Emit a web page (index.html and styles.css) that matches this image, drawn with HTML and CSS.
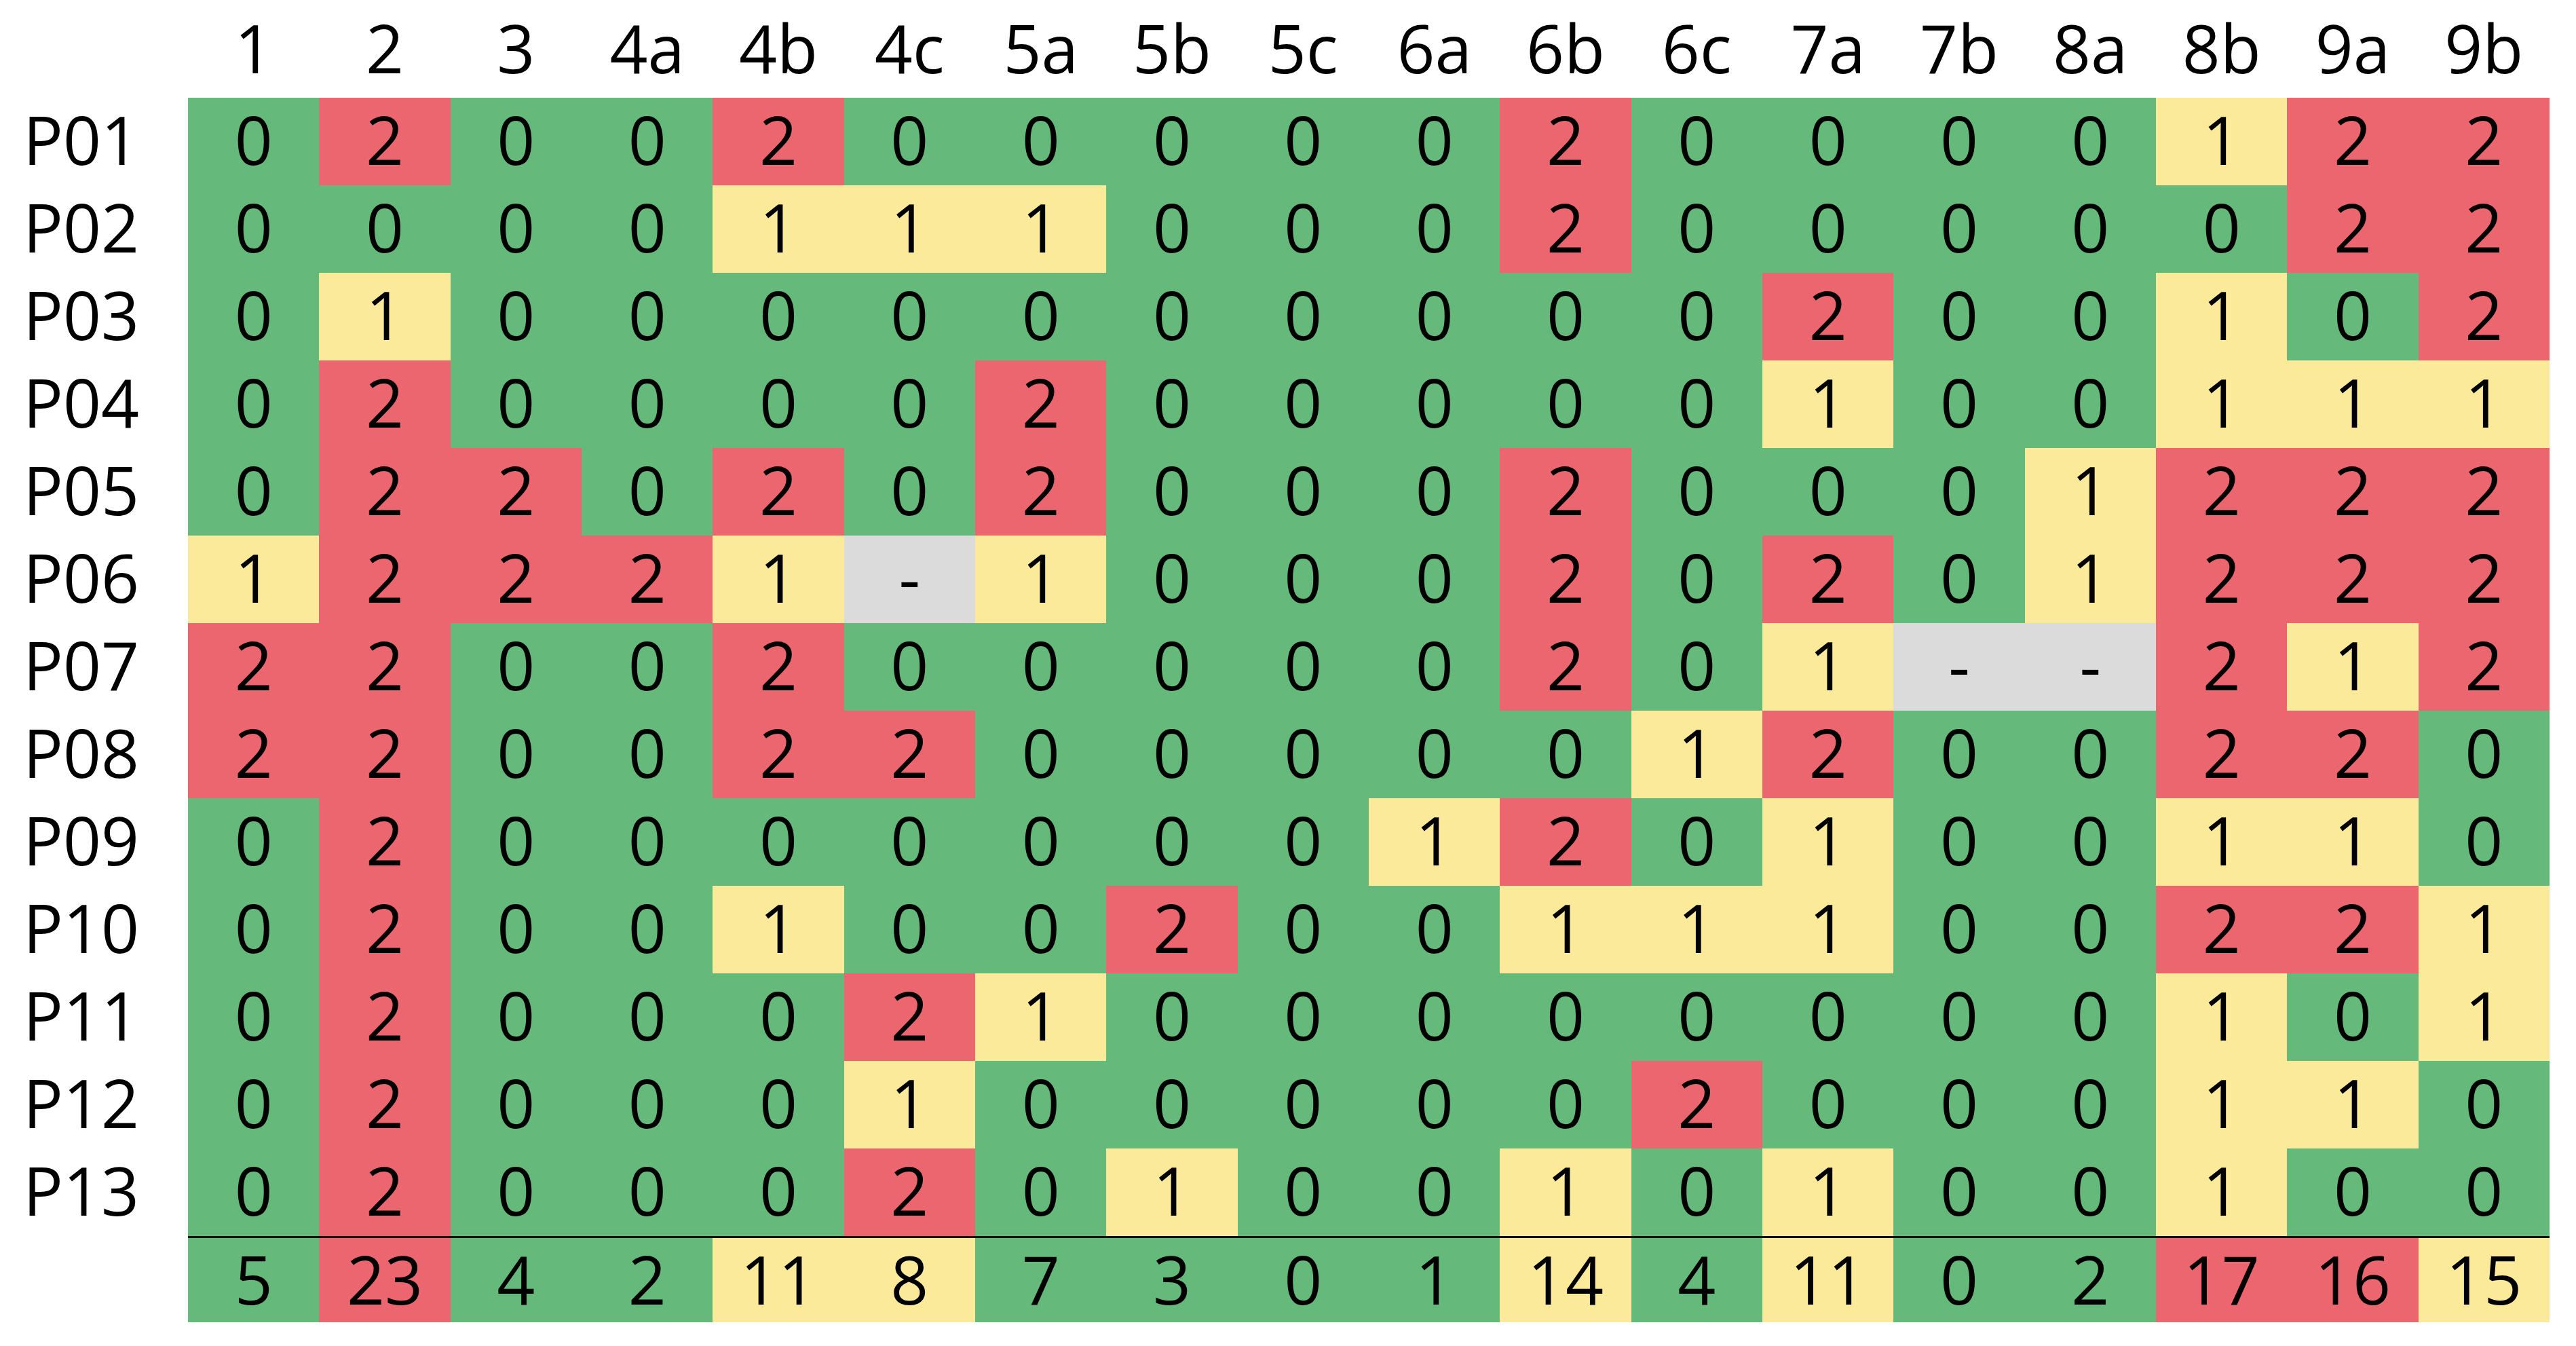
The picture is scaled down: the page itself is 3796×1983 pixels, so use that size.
FILE: index.html
```html
<!DOCTYPE html>
<html>
<head>
<meta charset="utf-8">
<title>Scores</title>
<link rel="stylesheet" href="styles.css">
</head>
<body>
<div class="table">
  <div class="hd"></div>
  <div class="hd">1</div><div class="hd">2</div><div class="hd">3</div><div class="hd">4a</div><div class="hd">4b</div><div class="hd">4c</div><div class="hd">5a</div><div class="hd">5b</div><div class="hd">5c</div><div class="hd">6a</div><div class="hd">6b</div><div class="hd">6c</div><div class="hd">7a</div><div class="hd">7b</div><div class="hd">8a</div><div class="hd">8b</div><div class="hd">9a</div><div class="hd">9b</div>

  <div class="lbl">P01</div>
  <div class="c g">0</div><div class="c r">2</div><div class="c g">0</div><div class="c g">0</div><div class="c r">2</div><div class="c g">0</div><div class="c g">0</div><div class="c g">0</div><div class="c g">0</div><div class="c g">0</div><div class="c r">2</div><div class="c g">0</div><div class="c g">0</div><div class="c g">0</div><div class="c g">0</div><div class="c y">1</div><div class="c r">2</div><div class="c r">2</div>

  <div class="lbl">P02</div>
  <div class="c g">0</div><div class="c g">0</div><div class="c g">0</div><div class="c g">0</div><div class="c y">1</div><div class="c y">1</div><div class="c y">1</div><div class="c g">0</div><div class="c g">0</div><div class="c g">0</div><div class="c r">2</div><div class="c g">0</div><div class="c g">0</div><div class="c g">0</div><div class="c g">0</div><div class="c g">0</div><div class="c r">2</div><div class="c r">2</div>

  <div class="lbl">P03</div>
  <div class="c g">0</div><div class="c y">1</div><div class="c g">0</div><div class="c g">0</div><div class="c g">0</div><div class="c g">0</div><div class="c g">0</div><div class="c g">0</div><div class="c g">0</div><div class="c g">0</div><div class="c g">0</div><div class="c g">0</div><div class="c r">2</div><div class="c g">0</div><div class="c g">0</div><div class="c y">1</div><div class="c g">0</div><div class="c r">2</div>

  <div class="lbl">P04</div>
  <div class="c g">0</div><div class="c r">2</div><div class="c g">0</div><div class="c g">0</div><div class="c g">0</div><div class="c g">0</div><div class="c r">2</div><div class="c g">0</div><div class="c g">0</div><div class="c g">0</div><div class="c g">0</div><div class="c g">0</div><div class="c y">1</div><div class="c g">0</div><div class="c g">0</div><div class="c y">1</div><div class="c y">1</div><div class="c y">1</div>

  <div class="lbl">P05</div>
  <div class="c g">0</div><div class="c r">2</div><div class="c r">2</div><div class="c g">0</div><div class="c r">2</div><div class="c g">0</div><div class="c r">2</div><div class="c g">0</div><div class="c g">0</div><div class="c g">0</div><div class="c r">2</div><div class="c g">0</div><div class="c g">0</div><div class="c g">0</div><div class="c y">1</div><div class="c r">2</div><div class="c r">2</div><div class="c r">2</div>

  <div class="lbl">P06</div>
  <div class="c y">1</div><div class="c r">2</div><div class="c r">2</div><div class="c r">2</div><div class="c y">1</div><div class="c x">-</div><div class="c y">1</div><div class="c g">0</div><div class="c g">0</div><div class="c g">0</div><div class="c r">2</div><div class="c g">0</div><div class="c r">2</div><div class="c g">0</div><div class="c y">1</div><div class="c r">2</div><div class="c r">2</div><div class="c r">2</div>

  <div class="lbl">P07</div>
  <div class="c r">2</div><div class="c r">2</div><div class="c g">0</div><div class="c g">0</div><div class="c r">2</div><div class="c g">0</div><div class="c g">0</div><div class="c g">0</div><div class="c g">0</div><div class="c g">0</div><div class="c r">2</div><div class="c g">0</div><div class="c y">1</div><div class="c x">-</div><div class="c x">-</div><div class="c r">2</div><div class="c y">1</div><div class="c r">2</div>

  <div class="lbl">P08</div>
  <div class="c r">2</div><div class="c r">2</div><div class="c g">0</div><div class="c g">0</div><div class="c r">2</div><div class="c r">2</div><div class="c g">0</div><div class="c g">0</div><div class="c g">0</div><div class="c g">0</div><div class="c g">0</div><div class="c y">1</div><div class="c r">2</div><div class="c g">0</div><div class="c g">0</div><div class="c r">2</div><div class="c r">2</div><div class="c g">0</div>

  <div class="lbl">P09</div>
  <div class="c g">0</div><div class="c r">2</div><div class="c g">0</div><div class="c g">0</div><div class="c g">0</div><div class="c g">0</div><div class="c g">0</div><div class="c g">0</div><div class="c g">0</div><div class="c y">1</div><div class="c r">2</div><div class="c g">0</div><div class="c y">1</div><div class="c g">0</div><div class="c g">0</div><div class="c y">1</div><div class="c y">1</div><div class="c g">0</div>

  <div class="lbl">P10</div>
  <div class="c g">0</div><div class="c r">2</div><div class="c g">0</div><div class="c g">0</div><div class="c y">1</div><div class="c g">0</div><div class="c g">0</div><div class="c r">2</div><div class="c g">0</div><div class="c g">0</div><div class="c y">1</div><div class="c y">1</div><div class="c y">1</div><div class="c g">0</div><div class="c g">0</div><div class="c r">2</div><div class="c r">2</div><div class="c y">1</div>

  <div class="lbl">P11</div>
  <div class="c g">0</div><div class="c r">2</div><div class="c g">0</div><div class="c g">0</div><div class="c g">0</div><div class="c r">2</div><div class="c y">1</div><div class="c g">0</div><div class="c g">0</div><div class="c g">0</div><div class="c g">0</div><div class="c g">0</div><div class="c g">0</div><div class="c g">0</div><div class="c g">0</div><div class="c y">1</div><div class="c g">0</div><div class="c y">1</div>

  <div class="lbl">P12</div>
  <div class="c g">0</div><div class="c r">2</div><div class="c g">0</div><div class="c g">0</div><div class="c g">0</div><div class="c y">1</div><div class="c g">0</div><div class="c g">0</div><div class="c g">0</div><div class="c g">0</div><div class="c g">0</div><div class="c r">2</div><div class="c g">0</div><div class="c g">0</div><div class="c g">0</div><div class="c y">1</div><div class="c y">1</div><div class="c g">0</div>

  <div class="lbl">P13</div>
  <div class="c g">0</div><div class="c r">2</div><div class="c g">0</div><div class="c g">0</div><div class="c g">0</div><div class="c r">2</div><div class="c g">0</div><div class="c y">1</div><div class="c g">0</div><div class="c g">0</div><div class="c y">1</div><div class="c g">0</div><div class="c y">1</div><div class="c g">0</div><div class="c g">0</div><div class="c y">1</div><div class="c g">0</div><div class="c g">0</div>

  <div class="lbl"></div>
  <div class="c t g">5</div><div class="c t r">23</div><div class="c t g">4</div><div class="c t g">2</div><div class="c t y">11</div><div class="c t y">8</div><div class="c t g">7</div><div class="c t g">3</div><div class="c t g">0</div><div class="c t g">1</div><div class="c t y">14</div><div class="c t g">4</div><div class="c t y">11</div><div class="c t g">0</div><div class="c t g">2</div><div class="c t r">17</div><div class="c t r">16</div><div class="c t y">15</div>
</div>
</body>
</html>
```

FILE: styles.css
```css
html, body {
  margin: 0;
  padding: 0;
  background: #ffffff;
}

body {
  font-family: "Open Sans", "Noto Sans", sans-serif;
  color: #000000;
  width: 3796px;
  height: 1983px;
  overflow: hidden;
}

.table {
  display: grid;
  width: 3757px;
  grid-template-columns: 277px repeat(18, 1fr);
  grid-template-rows: 144px repeat(13, 129px) 127px;
  font-size: 98px;
}

.hd {
  display: flex;
  align-items: center;
  justify-content: center;
  padding-bottom: 4px;
  box-sizing: border-box;
  white-space: nowrap;
}

.lbl {
  display: flex;
  align-items: center;
  padding-left: 34px;
  padding-bottom: 7px;
  box-sizing: border-box;
}

.c {
  display: flex;
  align-items: center;
  justify-content: center;
  padding-bottom: 7px;
  box-sizing: border-box;
}

.t {
  border-top: 3px solid #111111;
  padding-bottom: 4px;
}

.g { background: #64b97b; }
.r { background: #ec6670; }
.y { background: #fcea9b; }
.x { background: #dbdbdb; }
```
